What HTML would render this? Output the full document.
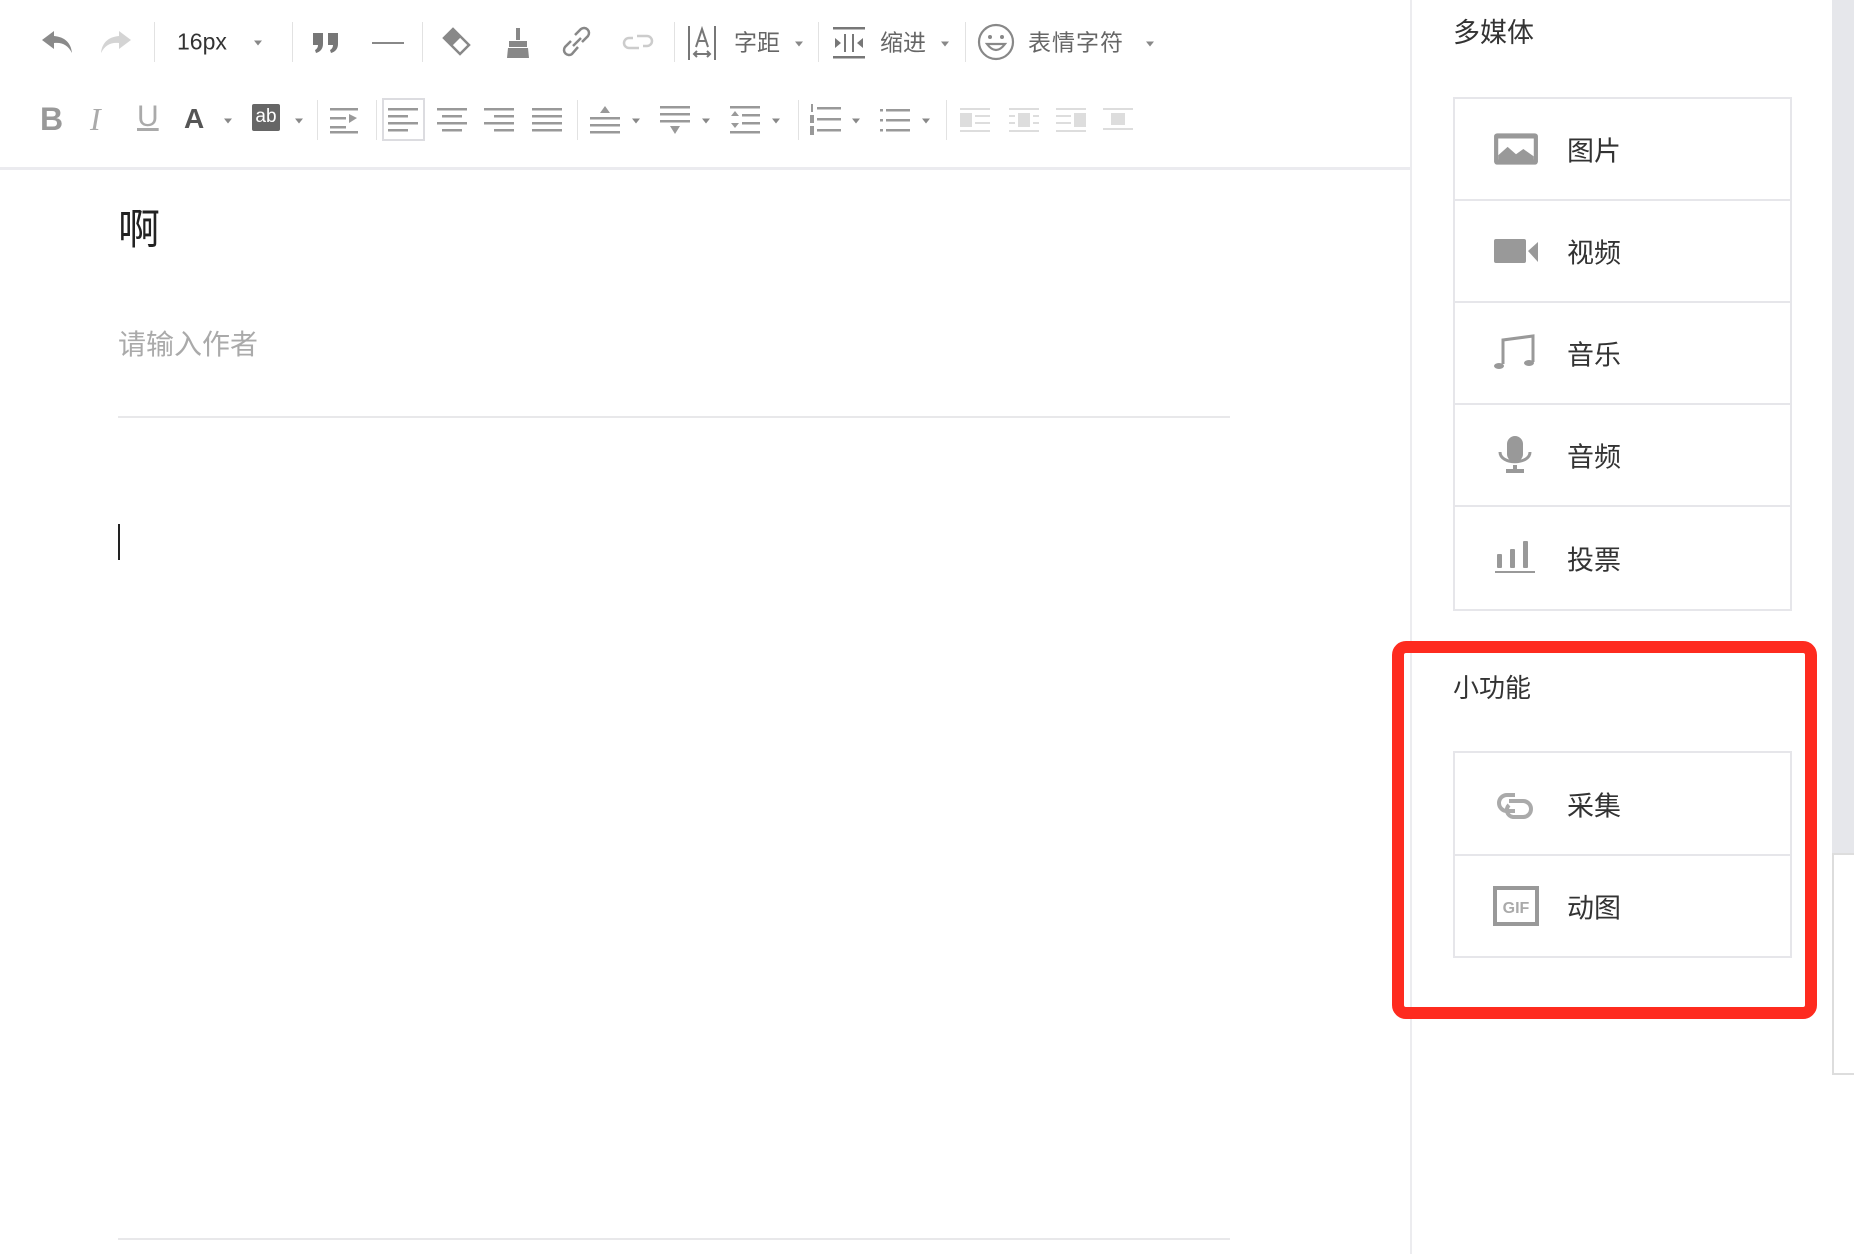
<!DOCTYPE html>
<html><head><meta charset="utf-8">
<style>
*{margin:0;padding:0;box-sizing:border-box}
body{width:1854px;height:1254px;position:relative;background:#fff;font-family:"Liberation Sans","Noto Sans CJK SC",sans-serif;overflow:hidden;color:#333}
.a{position:absolute}
.ic{position:absolute;transform:translate(-50%,-50%)}
.sep{position:absolute;width:1px;background:#e2e2e2}
.arr{position:absolute;width:0;height:0;border-left:4px solid transparent;border-right:4px solid transparent;border-top:5px solid #888;transform:translate(-50%,-50%)}
.tt{position:absolute;font-size:23px;color:#666;transform:translateY(-50%);line-height:1}
.card{position:absolute;left:1453px;width:339px;border:2px solid #e6e6ea}
.row{height:102px;border-bottom:2px solid #e6e6ea;position:relative}
.row:last-child{border-bottom:none}
.row .lb{position:absolute;left:112px;top:50%;transform:translateY(-50%);font-size:27px;color:#333}
.row svg{position:absolute;left:38px;top:50%;transform:translateY(-50%)}
</style></head><body>

<div class="a" style="left:0;top:167px;width:1411px;height:3px;background:#ebebef"></div>
<div class="a" style="left:1410px;top:0;width:2px;height:1254px;background:#ececef"></div>
<div class="a" style="left:1832px;top:0;width:22px;height:853px;background:#e6e7eb"></div>
<div class="a" style="left:1832px;top:853px;width:22px;height:222px;border-left:2px solid #ddd;border-top:2px solid #ddd;border-bottom:2px solid #ddd;background:#fff"></div>

<!-- row1 -->
<svg class="ic" style="left:57px;top:42px" width="34" height="26" viewBox="0 0 34 26"><path d="M14 2 L2 11 L14 20 V14 C22 13 28 16 32 24 C31 14 25 8 14 7 Z" fill="#8a8a8a"/></svg>
<svg class="ic" style="left:116px;top:42px" width="34" height="26" viewBox="0 0 34 26"><path d="M20 2 L32 11 L20 20 V14 C12 13 6 16 2 24 C3 14 9 8 20 7 Z" fill="#d4d4d4"/></svg>
<div class="sep" style="left:154px;top:22px;height:40px"></div>
<div class="tt" style="left:177px;top:42px;color:#333;font-size:23px">16px</div>
<div class="arr" style="left:258px;top:43px"></div>
<div class="sep" style="left:292px;top:22px;height:40px"></div>
<svg class="ic" style="left:326px;top:43px" width="28" height="22" viewBox="0 0 28 22"><path d="M1 1h10v11c0 5-3 8-7 9l-1-3c2-1 3-3 3-5H1z M16 1h10v11c0 5-3 8-7 9l-1-3c2-1 3-3 3-5h-5z" fill="#777"/></svg>
<div class="a" style="left:372px;top:42px;width:32px;height:2px;background:#888"></div>
<div class="sep" style="left:422px;top:22px;height:40px"></div>
<svg class="ic" style="left:456px;top:42px" width="30" height="30" viewBox="0 0 30 30"><path d="M12 2 L28 18 L19 27 L3 11 Z" fill="none" stroke="#888" stroke-width="2.5"/><path d="M3 11 L12 2 L20 10 L11 19 Z" fill="#888"/></svg>
<svg class="ic" style="left:518px;top:43px" width="26" height="32" viewBox="0 0 26 32"><rect x="11" y="1" width="4" height="12" fill="#888"/><path d="M4 14h18v6H4z M3 21h20l1 10H2z" fill="#888"/></svg>
<svg class="ic" style="left:577px;top:42px" width="32" height="34" viewBox="0 0 32 34"><g fill="none" stroke="#888" stroke-width="2.5"><path d="M14 10 L20 4 a5 5 0 0 1 7 7 L21 17"/><path d="M17 22 L11 29 a5 5 0 0 1 -7 -7 L10 16"/><path d="M12 21 L20 13"/></g></svg>
<svg class="ic" style="left:638px;top:42px" width="34" height="24" viewBox="0 0 34 24"><g fill="none" stroke="#ccc" stroke-width="2.5"><path d="M16 6 H26 a5 5 0 0 1 0 10 H22"/><path d="M18 18 H8 a5 5 0 0 1 0 -10 H12"/></g></svg>
<div class="sep" style="left:674px;top:22px;height:40px"></div>
<svg class="ic" style="left:702px;top:43px" width="30" height="36" viewBox="0 0 30 36"><g stroke="#777" stroke-width="2" fill="none"><path d="M2 1v34 M28 1v34"/><path d="M9 22 L15 4 L21 22 M11 16h8"/><path d="M7 29h16 M10 26l-3 3 3 3 M20 26l3 3-3 3"/></g></svg>
<div class="tt" style="left:734px;top:43px">字距</div>
<div class="arr" style="left:799px;top:44px"></div>
<div class="sep" style="left:818px;top:22px;height:40px"></div>
<svg class="ic" style="left:849px;top:43px" width="34" height="34" viewBox="0 0 34 34"><g fill="#777"><rect x="1" y="1" width="32" height="2.5"/><rect x="1" y="30" width="32" height="2.5"/><rect x="12" y="8" width="2" height="18"/><rect x="20" y="8" width="2" height="18"/><path d="M3 12 L9 17 L3 22 Z M31 12 L25 17 L31 22 Z"/></g></svg>
<div class="tt" style="left:880px;top:43px">缩进</div>
<div class="arr" style="left:945px;top:44px"></div>
<div class="sep" style="left:965px;top:22px;height:40px"></div>
<svg class="ic" style="left:996px;top:42px" width="38" height="38" viewBox="0 0 38 38"><g fill="none" stroke="#888" stroke-width="2.2"><circle cx="19" cy="19" r="17"/><path d="M10 21 Q19 33 28 21 Z"/></g><circle cx="13" cy="14" r="2" fill="#888"/><circle cx="25" cy="14" r="2" fill="#888"/></svg>
<div class="tt" style="left:1028px;top:43px;letter-spacing:1px">表情字符</div>
<div class="arr" style="left:1150px;top:44px"></div>

<!-- row2 -->
<div class="tt" style="left:40px;top:119px;font-size:32px;color:#999;font-weight:bold">B</div>
<div class="tt" style="left:90px;top:119px;font-size:32px;color:#aaa;font-style:italic;font-family:'Liberation Serif',serif">I</div>
<div class="tt" style="left:137px;top:117px;font-size:30px;color:#aaa;text-decoration:underline">U</div>
<div class="tt" style="left:184px;top:119px;font-size:28px;color:#555;font-weight:bold">A</div>
<div class="arr" style="left:228px;top:121px"></div>
<div class="a" style="left:252px;top:104px;width:28px;height:27px;background:#666;color:#fff;font-size:19px;text-align:center;line-height:25px;border-radius:2px">ab</div>
<div class="arr" style="left:299px;top:121px"></div>
<div class="sep" style="left:317px;top:100px;height:40px"></div>
<svg class="ic" style="left:345px;top:120px" width="30" height="28" viewBox="0 0 30 28"><g fill="#999"><rect x="0" y="2" width="28" height="2.5"/><rect x="0" y="11" width="16" height="2.5"/><rect x="0" y="20" width="16" height="2.5"/><rect x="0" y="25" width="28" height="2.5"/><path d="M19 8 L27 12 L19 17 Z"/></g></svg>
<div class="sep" style="left:376px;top:100px;height:40px"></div>
<div class="a" style="left:382px;top:98px;width:43px;height:43px;border:2px solid #dcdce0"></div>
<svg class="ic" style="left:403px;top:120px" width="30" height="28" viewBox="0 0 30 28"><g fill="#999"><rect y="2" width="30" height="2.5"/><rect y="9" width="20" height="2.5"/><rect y="16" width="30" height="2.5"/><rect y="23" width="20" height="2.5"/></g></svg>
<svg class="ic" style="left:452px;top:120px" width="30" height="28" viewBox="0 0 30 28"><g fill="#999"><rect y="2" width="30" height="2.5"/><rect x="5" y="9" width="20" height="2.5"/><rect y="16" width="30" height="2.5"/><rect x="5" y="23" width="20" height="2.5"/></g></svg>
<svg class="ic" style="left:499px;top:120px" width="30" height="28" viewBox="0 0 30 28"><g fill="#999"><rect y="2" width="30" height="2.5"/><rect x="10" y="9" width="20" height="2.5"/><rect y="16" width="30" height="2.5"/><rect x="10" y="23" width="20" height="2.5"/></g></svg>
<svg class="ic" style="left:547px;top:120px" width="30" height="28" viewBox="0 0 30 28"><g fill="#999"><rect y="2" width="30" height="2.5"/><rect y="9" width="30" height="2.5"/><rect y="16" width="30" height="2.5"/><rect y="23" width="30" height="2.5"/></g></svg>
<div class="sep" style="left:577px;top:100px;height:40px"></div>
<svg class="ic" style="left:605px;top:120px" width="30" height="30" viewBox="0 0 30 30"><g fill="#999"><path d="M15 1 L20 8 H10 Z"/><rect y="12" width="30" height="2.5"/><rect y="19" width="30" height="2.5"/><rect y="26" width="30" height="2.5"/></g></svg>
<div class="arr" style="left:636px;top:121px"></div>
<svg class="ic" style="left:675px;top:120px" width="30" height="30" viewBox="0 0 30 30"><g fill="#999"><rect y="1" width="30" height="2.5"/><rect y="8" width="30" height="2.5"/><rect y="15" width="30" height="2.5"/><path d="M15 29 L20 21 H10 Z"/></g></svg>
<div class="arr" style="left:706px;top:121px"></div>
<svg class="ic" style="left:745px;top:120px" width="30" height="30" viewBox="0 0 30 30"><g fill="#999"><rect y="1" width="30" height="2.5"/><rect x="12" y="9" width="18" height="2.5"/><rect x="12" y="17" width="18" height="2.5"/><rect y="26" width="30" height="2.5"/><path d="M5 6 L9 11 H1 Z M5 23 L9 18 H1 Z"/></g></svg>
<div class="arr" style="left:776px;top:121px"></div>
<div class="sep" style="left:798px;top:100px;height:40px"></div>
<svg class="ic" style="left:825px;top:120px" width="32" height="34" viewBox="0 0 32 34"><g fill="#999"><rect x="8" y="4" width="24" height="2.5"/><rect x="8" y="15" width="24" height="2.5"/><rect x="8" y="26" width="24" height="2.5"/><rect x="2" y="1" width="2" height="8"/><rect x="1" y="12" width="4" height="8"/><rect x="1" y="23" width="4" height="9"/></g></svg>
<div class="arr" style="left:856px;top:121px"></div>
<svg class="ic" style="left:895px;top:120px" width="30" height="28" viewBox="0 0 30 28"><g fill="#999"><rect x="0" y="3" width="3" height="2.5"/><rect x="6" y="3" width="24" height="2.5"/><rect x="0" y="13" width="3" height="2.5"/><rect x="6" y="13" width="24" height="2.5"/><rect x="0" y="23" width="3" height="2.5"/><rect x="6" y="23" width="24" height="2.5"/></g></svg>
<div class="arr" style="left:926px;top:121px"></div>
<div class="sep" style="left:946px;top:100px;height:40px"></div>
<svg class="ic" style="left:975px;top:120px" width="30" height="26" viewBox="0 0 30 26"><g fill="#ddd"><rect x="0" y="6" width="12" height="14"/><rect y="1" width="30" height="2"/><rect x="15" y="8" width="15" height="2"/><rect x="15" y="15" width="15" height="2"/><rect y="23" width="30" height="2"/></g></svg>
<svg class="ic" style="left:1024px;top:120px" width="30" height="26" viewBox="0 0 30 26"><g fill="#ddd"><rect x="9" y="6" width="12" height="14"/><rect y="1" width="30" height="2"/><rect x="0" y="8" width="6" height="2"/><rect x="24" y="8" width="6" height="2"/><rect x="0" y="15" width="6" height="2"/><rect x="24" y="15" width="6" height="2"/><rect y="23" width="30" height="2"/></g></svg>
<svg class="ic" style="left:1071px;top:120px" width="30" height="26" viewBox="0 0 30 26"><g fill="#ddd"><rect x="18" y="6" width="12" height="14"/><rect y="1" width="30" height="2"/><rect x="0" y="8" width="15" height="2"/><rect x="0" y="15" width="15" height="2"/><rect y="23" width="30" height="2"/></g></svg>
<svg class="ic" style="left:1118px;top:120px" width="30" height="26" viewBox="0 0 30 26"><g fill="#ddd"><rect y="1" width="30" height="2"/><rect x="8" y="6" width="14" height="12"/><rect y="21" width="30" height="2"/></g></svg>

<!-- editor -->
<div class="a" style="left:118px;top:204px;font-size:42px;color:#222;line-height:52px">啊</div>
<div class="a" style="left:118px;top:328px;font-size:28px;color:#aaa;line-height:34px">请输入作者</div>
<div class="a" style="left:118px;top:416px;width:1112px;height:2px;background:#e8e8ea"></div>
<div class="a" style="left:118px;top:524px;width:2px;height:36px;background:#222"></div>
<div class="a" style="left:118px;top:1238px;width:1112px;height:2px;background:#e8e8ea"></div>

<!-- sidebar -->
<div class="a" style="left:1453px;top:17px;font-size:27px;color:#333;line-height:32px">多媒体</div>
<div class="card" style="top:97px">
 <div class="row"><svg width="46" height="36" viewBox="0 0 44 32"><rect x="1" y="1" width="42" height="30" rx="3" fill="#999"/><path d="M5 6h34v20H5z" fill="#fff"/><path d="M5 26 L5 22 L14 14 L22 21 L29 16 L39 23 V26 Z" fill="#999"/></svg><span class="lb">图片</span></div>
 <div class="row"><svg width="46" height="28" viewBox="0 0 46 26"><rect x="1" y="1" width="32" height="24" rx="2" fill="#999"/><path d="M35 13 L45 4 V24 Z" fill="#999"/></svg><span class="lb">视频</span></div>
 <div class="row"><svg width="44" height="42" viewBox="0 0 44 38"><path d="M10 30 V6 L40 2 V28" fill="none" stroke="#999" stroke-width="3"/><ellipse cx="6" cy="32" rx="5" ry="3" fill="#999"/><ellipse cx="36" cy="29" rx="5" ry="3" fill="#999"/></svg><span class="lb">音乐</span></div>
 <div class="row"><svg width="44" height="46" viewBox="0 0 44 40"><rect x="14" y="1" width="16" height="26" rx="8" fill="#999"/><path d="M7 17 C7 30 37 30 37 17" fill="none" stroke="#999" stroke-width="3"/><rect x="20" y="30" width="4" height="5" fill="#999"/><rect x="13" y="34" width="18" height="4" fill="#999"/></svg><span class="lb">音频</span></div>
 <div class="row"><svg width="44" height="38" viewBox="0 0 44 36"><rect x="4" y="14" width="5" height="14" rx="1" fill="#999"/><rect x="17" y="9" width="5" height="19" rx="1" fill="#999"/><rect x="30" y="1" width="5" height="27" rx="1" fill="#999"/><rect x="2" y="31" width="40" height="2" fill="#999"/></svg><span class="lb">投票</span></div>
</div>

<div class="a" style="left:1392px;top:641px;width:425px;height:378px;border:12px solid #fe2b1f;border-radius:14px"></div>
<div class="a" style="left:1453px;top:672px;font-size:26px;color:#333;line-height:32px">小功能</div>
<div class="card" style="top:751px">
 <div class="row" style="height:103px"><svg width="46" height="34" viewBox="0 0 46 34"><g fill="none" stroke="#aaa" stroke-width="4"><path d="M22 8 H14 a8 8 0 0 0 0 16 H22"/><path d="M16 14 H30 a8 8 0 0 1 0 16 H20 a7 7 0 0 1 -4 -12"/></g></svg><span class="lb">采集</span></div>
 <div class="row" style="height:100px"><svg width="46" height="40" viewBox="0 0 46 40"><rect x="2" y="2" width="42" height="36" fill="#fff" stroke="#999" stroke-width="4"/><text x="23" y="27" text-anchor="middle" font-family="Liberation Sans" font-weight="bold" font-size="16" fill="#aaa">GIF</text></svg><span class="lb">动图</span></div>
</div>
</body></html>
